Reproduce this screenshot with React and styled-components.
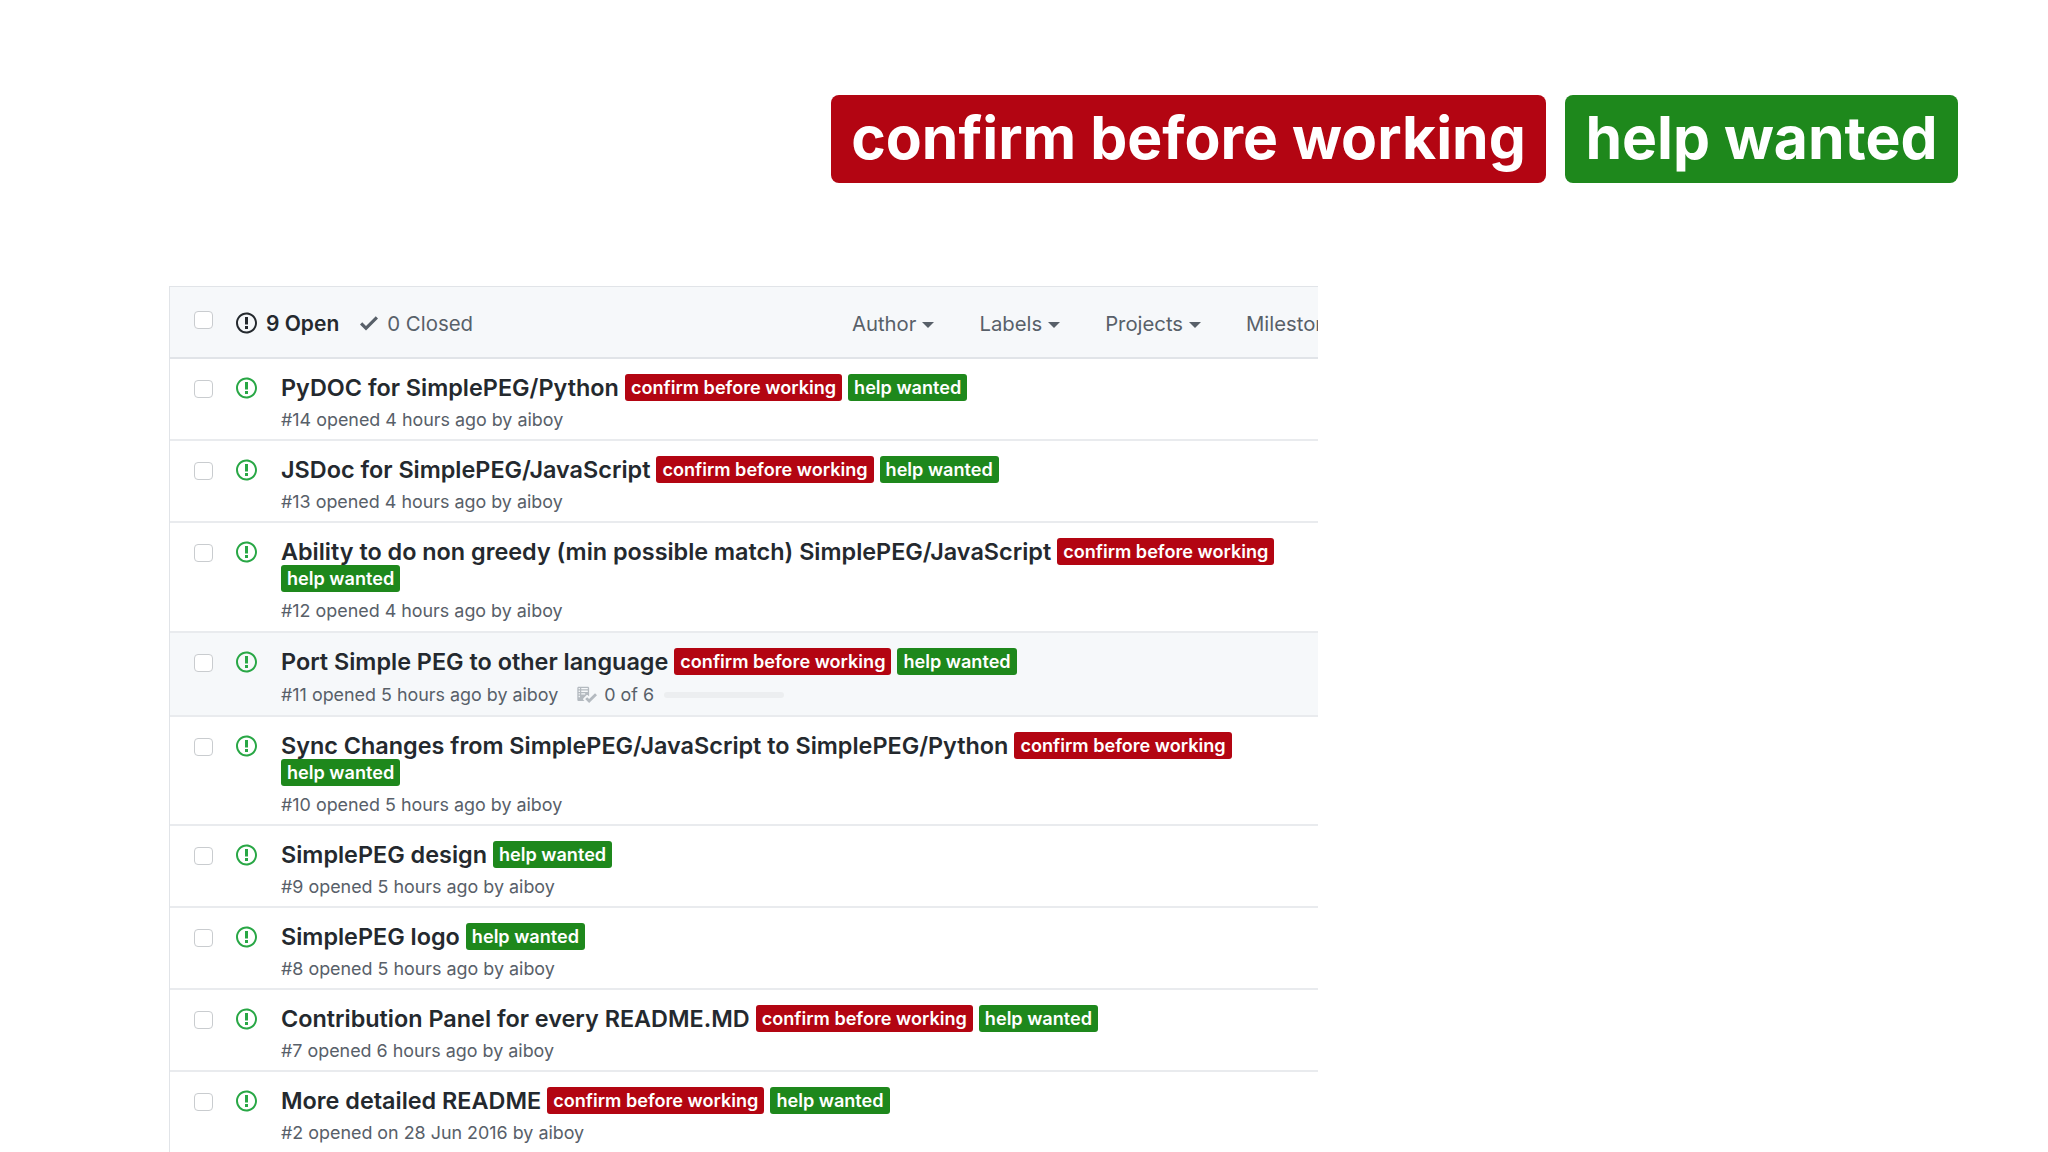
import React from 'react';
import styled, {createGlobalStyle} from "styled-components";

const issues = [
    {id: 1, title: "PyDOC for SimplePEG/Python", meta: "#14 opened 4 hours ago by aiboy", red: true},
    {id: 2, title: "JSDoc for SimplePEG/JavaScript", meta: "#13 opened 4 hours ago by aiboy", red: true},
    {id: 3, title: "Ability to do non greedy (min possible match) SimplePEG/JavaScript", meta: "#12 opened 4 hours ago by aiboy", red: true, roomy: true},
    {id: 4, title: "Port Simple PEG to other language", meta: "#11 opened 5 hours ago by aiboy", red: true, tasks: "0 of 6", hover: true},
    {id: 5, title: "Sync Changes from SimplePEG/JavaScript to SimplePEG/Python", meta: "#10 opened 5 hours ago by aiboy", red: true},
    {id: 6, title: "SimplePEG design", meta: "#9 opened 5 hours ago by aiboy"},
    {id: 7, title: "SimplePEG logo", meta: "#8 opened 5 hours ago by aiboy"},
    {id: 8, title: "Contribution Panel for every README.MD", meta: "#7 opened 6 hours ago by aiboy", red: true},
    {id: 9, title: "More detailed README", meta: "#2 opened on 28 Jun 2016 by aiboy", red: true},
];

const filters = ["Author", "Labels", "Projects", "Milestones"];

const IssueIcon = ({color}) => (
    <IconSvg viewBox="0 0 14 16" width="21" height="24" fill={color}>
        <path d="M7 2.3c3.14 0 5.7 2.56 5.7 5.7s-2.56 5.7-5.7 5.7A5.71 5.71 0 0 1 1.3 8c0-3.14 2.56-5.7 5.7-5.7zM7 1C3.14 1 0 4.14 0 8s3.14 7 7 7 7-3.14 7-7-3.14-7-7-7zm1 3H6v5h2V4zm0 6H6v2h2v-2z"/>
    </IconSvg>
);

const App = () => {
    return (
        <>
            <GlobalStyle/>
            <Page>
                <Banner>
                    <BigLabel $bg="#b30512" $w="715px">confirm before working</BigLabel>
                    <BigLabel $bg="#1e881c" $w="393px">help wanted</BigLabel>
                </Banner>
                <Panel>
                    <Header>
                        <Check type="checkbox" readOnly $top="-3px"/>
                        <IssueIcon color="#24292e"/>
                        <OpenTxt>9 Open</OpenTxt>
                        <ClosedGroup>
                            <IconSvg viewBox="0 0 12 16" width="18" height="24" fill="#586069">
                                <path d="M12 5l-8 8-4-4 1.5-1.5L4 10l6.5-6.5L12 5z"/>
                            </IconSvg>
                            <ClosedTxt>0 Closed</ClosedTxt>
                        </ClosedGroup>
                        <Filters>
                            {filters.map((f) => (
                                <Filter key={f}>{f}<Caret/></Filter>
                            ))}
                        </Filters>
                    </Header>
                    {issues.map((issue) => (
                        <Row key={issue.id} $hover={issue.hover} $roomy={issue.roomy}>
                            <Check type="checkbox" readOnly/>
                            <IssueIcon color="#28a745"/>
                            <Body>
                                <TitleLine>
                                    <Title>{issue.title}</Title>
                                    {issue.red && <Label $bg="#b30512">confirm before working</Label>}
                                    <Label $bg="#1e881c">help wanted</Label>
                                </TitleLine>
                                <Meta $tall={issue.tasks}>
                                    {issue.meta}
                                    {issue.tasks && (
                                        <Tasks>
                                            <svg viewBox="0 0 16 16" width="21" height="21" fill="#b4bac0">
                                                <path d="M16 8.5l-6 6-3-3L8.5 10l1.5 1.5L14.5 7 16 8.5zM5.7 12.2l.8.8H2c-.55 0-1-.45-1-1V3c0-.55.45-1 1-1h7c.55 0 1 .45 1 1v6.5l-.8-.8c-.39-.39-1.03-.39-1.42 0L5.7 10.8a.996.996 0 0 0 0 1.41v-.01zM4 4h5V3H4v1zm0 2h5V5H4v1zm0 2h3V7H4v1zM3 9H2v1h1V9zm0-2H2v1h1V7zm0-2H2v1h1V5zm0-2H2v1h1V3z"/>
                                            </svg>
                                            {issue.tasks}
                                            <Progress/>
                                        </Tasks>
                                    )}
                                </Meta>
                            </Body>
                        </Row>
                    ))}
                </Panel>
            </Page>
        </>
    );
};

const GlobalStyle = createGlobalStyle`
  html, body {
    margin: 0;
    height: 100%;
    overflow: hidden;
    background: #fff;
  }
`
const Page = styled.div`
  padding: 95px 90px 0 169px;
  font-family: Inter, "Liberation Sans", sans-serif;
  color: #24292e;
`
const Banner = styled.div`
  display: flex;
  justify-content: flex-end;
  gap: 19px;
  margin-bottom: 103px;
`
const BigLabel = styled.div`
  box-sizing: border-box;
  width: ${(props) => props.$w};
  height: 88px;
  padding-bottom: 4px;
  display: flex;
  align-items: center;
  justify-content: center;
  background: ${(props) => props.$bg};
  border-radius: 8px;
  color: #fff;
  font-size: 58.8px;
  font-weight: 700;
`
const Panel = styled.div`
  width: 1148px;
  overflow: hidden;
  border-left: 1px solid #e1e4e8;
  border-top: 1px solid #e1e4e8;
`
const Header = styled.div`
  box-sizing: border-box;
  height: 72px;
  display: flex;
  align-items: center;
  padding: 2px 0 0 24px;
  background: #f6f8fa;
  border-bottom: 2px solid #e1e4e8;
  white-space: nowrap;
`
const Check = styled.input`
  appearance: none;
  flex: none;
  width: 19px;
  height: 18px;
  margin: 0 23px 0 0;
  position: relative;
  top: ${(props) => props.$top || "0"};
  background: #fff;
  border: 1px solid #c9cccf;
  border-radius: 4px;
`
const IconSvg = styled.svg`
  flex: none;
  display: block;
`
const OpenTxt = styled.span`
  margin-left: 9px;
  font-size: 21px;
  font-weight: 600;
`
const ClosedGroup = styled.div`
  display: flex;
  align-items: center;
  margin-left: 21px;
`
const ClosedTxt = styled.span`
  margin-left: 9px;
  font-size: 20.4px;
  color: #586069;
`
const Filters = styled.div`
  display: flex;
  gap: 45px;
  margin-left: auto;
  width: 467px;
  flex: none;
  margin-right: -1px;
`
const Filter = styled.div`
  display: flex;
  align-items: center;
  flex: none;
  font-size: 20.3px;
  color: #586069;
`
const Caret = styled.span`
  margin-left: 6px;
  margin-top: 3px;
  border-style: solid;
  border-width: 6px 6px 0;
  border-color: #586069 transparent transparent;
`
const Row = styled.div`
  display: flex;
  align-items: flex-start;
  padding: 15px 0 ${(props) => props.$roomy ? "9px" : "8px"} 24px;
  background: ${(props) => props.$hover ? "#f6f8fa" : "#fff"};
  border-bottom: 2px solid #e9ebee;

  ${Check} {
    margin-top: 6px;
  }
  ${IconSvg} {
    margin-top: 2px;
  }
`
const Body = styled.div`
  margin-left: 24px;
  width: 1020px;
`
const TitleLine = styled.div`
  font-size: 23.4px;
  line-height: 27px;
`
const Title = styled.span`
  font-weight: 600;
  margin-right: 6px;
`
const Label = styled.span`
  display: inline-block;
  height: 27px;
  line-height: 27px;
  padding: 0 6px;
  margin-right: 6px;
  vertical-align: top;
  background: ${(props) => props.$bg};
  border-radius: 3px;
  color: #fff;
  font-size: 18.1px;
  font-weight: 600;
`
const Meta = styled.div`
  display: flex;
  align-items: center;
  height: ${(props) => props.$tall ? "25px" : "24px"};
  margin-top: ${(props) => props.$tall ? "7px" : "6px"};
  font-size: 17.9px;
  color: #586069;
`
const Tasks = styled.span`
  display: flex;
  align-items: center;
  gap: 7px;
  margin-left: 18px;
`
const Progress = styled.span`
  width: 120px;
  height: 6px;
  margin-left: 3px;
  background: #eceef0;
  border-radius: 3px;
`

export default App;
